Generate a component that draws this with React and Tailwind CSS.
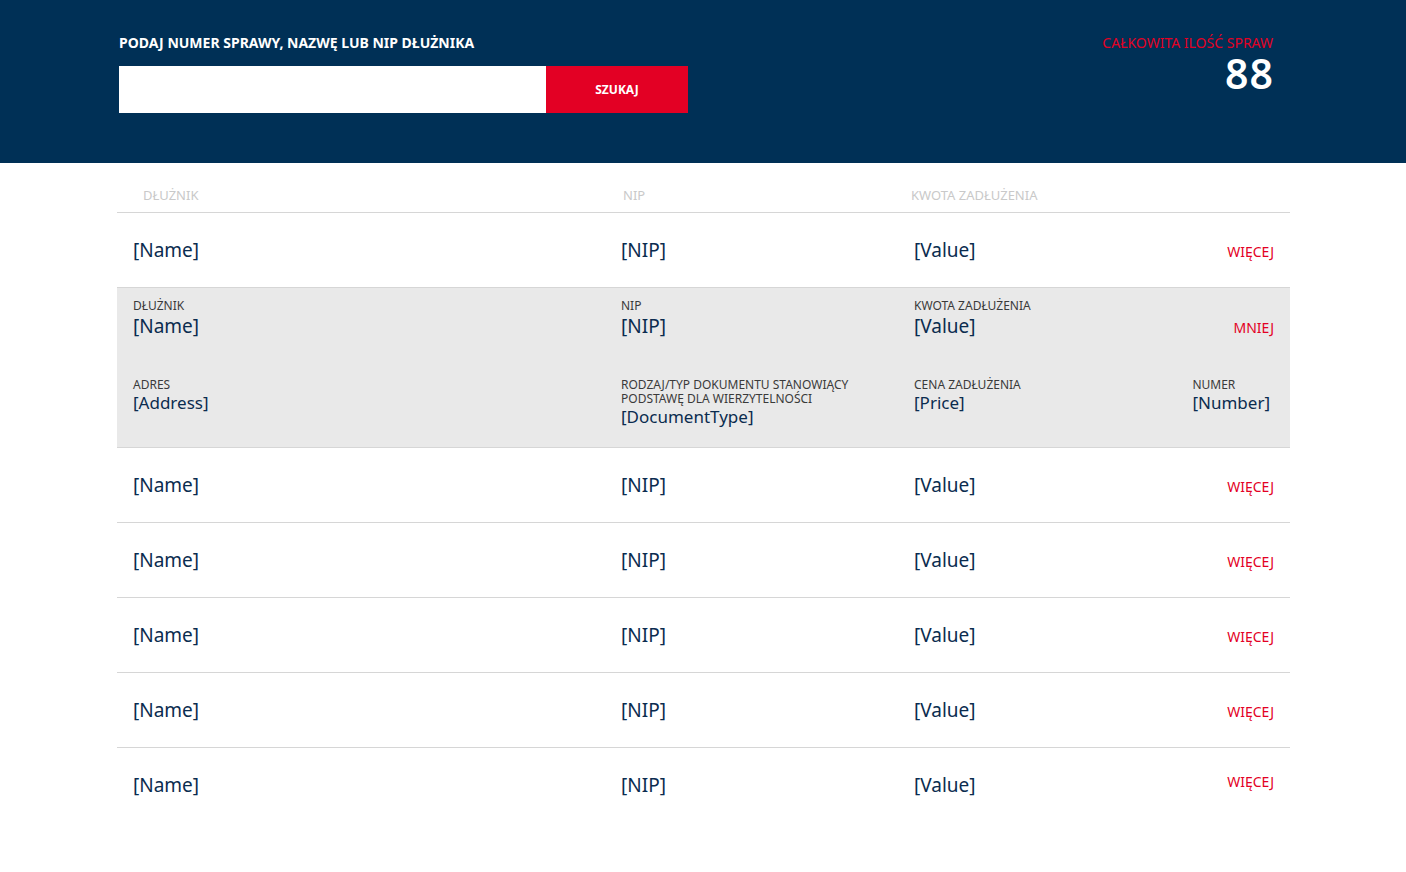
import React, { useState } from 'react';

const rows = [
  { name: '[Name]', nip: '[NIP]', value: '[Value]' },
  { name: '[Name]', nip: '[NIP]', value: '[Value]' },
  { name: '[Name]', nip: '[NIP]', value: '[Value]' },
  { name: '[Name]', nip: '[NIP]', value: '[Value]' },
  { name: '[Name]', nip: '[NIP]', value: '[Value]' },
  { name: '[Name]', nip: '[NIP]', value: '[Value]' },
  { name: '[Name]', nip: '[NIP]', value: '[Value]' },
];

function Label({ children }) {
  return <div className="text-[12px] leading-[14px] text-[#3a3a3a] uppercase">{children}</div>;
}

export default function App() {
  const [openIdx, setOpenIdx] = useState(1);

  return (
    <div className="min-h-[872px] bg-white font-['Noto_Sans',sans-serif] text-[#0b2c4f]">
      {/* Header */}
      <div className="h-[163px] bg-[#003056] px-[119px] pt-[34px] flex justify-between">
        <div>
          <div className="text-[14px] leading-[18px] font-bold text-white">
            PODAJ NUMER SPRAWY, NAZWĘ LUB NIP DŁUŻNIKA
          </div>
          <div className="mt-[14px] flex h-[47px]">
            <input className="w-[427px] h-full bg-white outline-none px-3 text-sm text-[#0b2c4f]" />
            <button className="w-[142px] h-full bg-[#e30024] text-white text-[12px] font-bold">
              SZUKAJ
            </button>
          </div>
        </div>
        <div className="mr-[14px] flex flex-col items-end">
          <div className="text-[14px] leading-[18px] text-[#e30024]">CAŁKOWITA ILOŚĆ SPRAW</div>
          <div className="text-[41px] leading-[42px] font-semibold text-white -mr-[1px] tracking-[1px]">88</div>
        </div>
      </div>

      {/* Table */}
      <div className="mx-[117px] w-[1173px]">
        <div className="grid grid-cols-[506px_288px_1fr] h-[50px] items-end pb-[7px] border-b border-[#d6d6d6] text-[13px] text-[#c9c9c9]">
          <div className="pl-[26px]">DŁUŻNIK</div>
          <div>NIP</div>
          <div>KWOTA ZADŁUŻENIA</div>
        </div>

        {rows.map((r, i) =>
          i === openIdx ? (
            <div key={i} className="bg-[#e9e9e9] border-b border-[#d6d6d6] h-[160px] pt-[11px] px-[16px]">
              <div className="grid grid-cols-[488px_293px_1fr_auto]">
                <div>
                  <Label>DŁUŻNIK</Label>
                  <div className="text-[19px] leading-[26px]">{r.name}</div>
                </div>
                <div>
                  <Label>NIP</Label>
                  <div className="text-[19px] leading-[26px]">{r.nip}</div>
                </div>
                <div>
                  <Label>KWOTA ZADŁUŻENIA</Label>
                  <div className="text-[19px] leading-[26px]">{r.value}</div>
                </div>
                <button
                  onClick={() => setOpenIdx(-1)}
                  className="self-end mb-[1px] text-[14px] text-[#e30024]"
                >
                  MNIEJ
                </button>
              </div>
              <div className="grid grid-cols-[488px_293px_1fr_auto] mt-[39px]">
                <div>
                  <Label>ADRES</Label>
                  <div className="text-[17px] leading-[19px] mt-[1px]">[Address]</div>
                </div>
                <div>
                  <Label>
                    RODZAJ/TYP DOKUMENTU STANOWIĄCY
                    <br />
                    PODSTAWĘ DLA WIERZYTELNOŚCI
                  </Label>
                  <div className="text-[17px] leading-[19px] mt-[1px]">[DocumentType]</div>
                </div>
                <div>
                  <Label>CENA ZADŁUŻENIA</Label>
                  <div className="text-[17px] leading-[19px] mt-[1px]">[Price]</div>
                </div>
                <div className="pr-[4px]">
                  <Label>NUMER</Label>
                  <div className="text-[17px] leading-[19px] mt-[1px]">[Number]</div>
                </div>
              </div>
            </div>
          ) : (
            <div
              key={i}
              className={`grid grid-cols-[488px_293px_1fr_auto] items-center h-[75px] px-[16px] ${
                i === rows.length - 1 ? '' : 'border-b border-[#d6d6d6]'
              }`}
            >
              <div className="text-[19px]">{r.name}</div>
              <div className="text-[19px]">{r.nip}</div>
              <div className="text-[19px]">{r.value}</div>
              <button
                onClick={() => setOpenIdx(i)}
                className={`text-[14px] text-[#e30024] ${i === rows.length - 1 ? '-mt-[8px]' : 'mt-[2px]'}`}
              >
                WIĘCEJ
              </button>
            </div>
          )
        )}
      </div>
    </div>
  );
}
